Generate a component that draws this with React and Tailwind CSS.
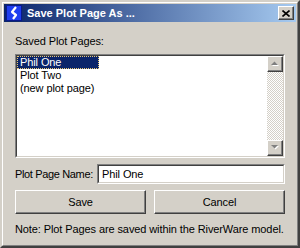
import React, { useState } from "react";

const raised =
  "border border-t-white border-l-white border-r-[#404040] border-b-[#404040] shadow-[inset_-1px_-1px_0_#808080]";

const ScrollButton = ({ up }) => (
  <div className={`w-[16px] h-[16px] bg-[#d4d0c8] flex items-center justify-center ${raised}`}>
    <svg width="8" height="6" viewBox="0 0 8 6">
      {up ? (
        <>
          <polygon points="1,5 8,5 4.5,1.5" fill="#fff" />
          <polygon points="0,4 7,4 3.5,0.5" fill="#808080" />
        </>
      ) : (
        <>
          <polygon points="1,1 8,1 4.5,4.5" fill="#fff" />
          <polygon points="0,0 7,0 3.5,3.5" fill="#808080" />
        </>
      )}
    </svg>
  </div>
);

const App = () => {
  const [selected, setSelected] = useState(0);
  const [name, setName] = useState("Phil One");
  const pages = ["Phil One", "Plot Two", "(new plot page)"];

  return (
    <div
      className="w-[300px] h-[248px] bg-[#d4d0c8] border-2 border-t-[#d4d0c8] border-l-[#d4d0c8] border-r-[#404040] border-b-[#404040] text-[11px] text-black tracking-[-0.1px]"
      style={{ fontFamily: "Tahoma, 'Liberation Sans', Arial, sans-serif" }}
    >
      <div className="h-full border border-t-white border-l-white border-r-[#808080] border-b-[#808080] p-[1px] flex flex-col">
        {/* Title bar */}
        <div className="h-[18px] flex items-center bg-[linear-gradient(to_right,#0a246a,#a6caf0)] pl-[2px] pr-[2px]">
          <svg width="16" height="16" viewBox="0 0 16 16" className="shrink-0">
            <rect x="0" y="0" width="16" height="16" fill="#0a1a8c" />
            <rect x="1" y="1" width="14" height="14" fill="#1f3ff0" />
            <path
              d="M10 2 L6 7 L10 10 L7 14"
              stroke="#fff"
              strokeWidth="2.2"
              fill="none"
              strokeLinejoin="round"
            />
          </svg>
          <span className="ml-[5px] text-white font-bold text-[11px] leading-none tracking-normal">
            Save Plot Page As ...
          </span>
          <div className={`ml-auto w-[16px] h-[14px] bg-[#d4d0c8] flex items-center justify-center ${raised}`}>
            <svg width="8" height="7" viewBox="0 0 8 7">
              <path d="M0.5 0.5 L7.5 6.5 M7.5 0.5 L0.5 6.5" stroke="#000" strokeWidth="1.6" />
            </svg>
          </div>
        </div>

        {/* Body */}
        <div className="flex-1 flex flex-col px-[11px] pt-[13px]">
          <div className="leading-[13px] h-[13px]">Saved Plot Pages:</div>

          <div className="mt-[6px] h-[104px] border border-t-[#808080] border-l-[#808080] border-r-white border-b-white">
            <div className="h-full flex border border-t-[#404040] border-l-[#404040] border-r-[#d4d0c8] border-b-[#d4d0c8] bg-white">
              <div className="flex-1 flex flex-col items-start">
                {pages.map((p, i) => (
                  <div
                    key={p}
                    onClick={() => setSelected(i)}
                    className={
                      i === selected
                        ? "h-[13px] leading-[11px] pl-[2px] pr-[3px] bg-[#0a246a] text-white border border-dotted border-[#e8c878] w-[82px]"
                        : "h-[13px] leading-[13px] pl-[3px] text-black"
                    }
                  >
                    {p}
                  </div>
                ))}
              </div>
              <div className="w-[16px] flex flex-col bg-[repeating-conic-gradient(#d4d0c8_0_25%,#ffffff_0_50%)] bg-[length:2px_2px]">
                <ScrollButton up />
                <div className="flex-1" />
                <ScrollButton />
              </div>
            </div>
          </div>

          <div className="mt-[6px] flex items-center">
            <span className="w-[82px] shrink-0 whitespace-nowrap tracking-[-0.35px]">Plot Page Name:</span>
            <div className="flex-1 h-[20px] border border-t-[#808080] border-l-[#808080] border-r-white border-b-white">
              <input
                value={name}
                onChange={(e) => setName(e.target.value)}
                className="w-full h-full border border-t-[#404040] border-l-[#404040] border-r-[#d4d0c8] border-b-[#d4d0c8] bg-white px-[3px] text-[11px] outline-none"
                style={{ fontFamily: "Tahoma, 'Liberation Sans', Arial, sans-serif" }}
              />
            </div>
          </div>

          <div className="mt-[6px] flex gap-[8px]">
            <button className={`flex-1 h-[24px] bg-[#d4d0c8] ${raised}`}>Save</button>
            <button className={`flex-1 h-[24px] bg-[#d4d0c8] ${raised}`}>Cancel</button>
          </div>

          <div className="mt-[9px] leading-[13px] whitespace-nowrap">
            Note: Plot Pages are saved within the RiverWare model.
          </div>
        </div>
      </div>
    </div>
  );
};

export default App;
